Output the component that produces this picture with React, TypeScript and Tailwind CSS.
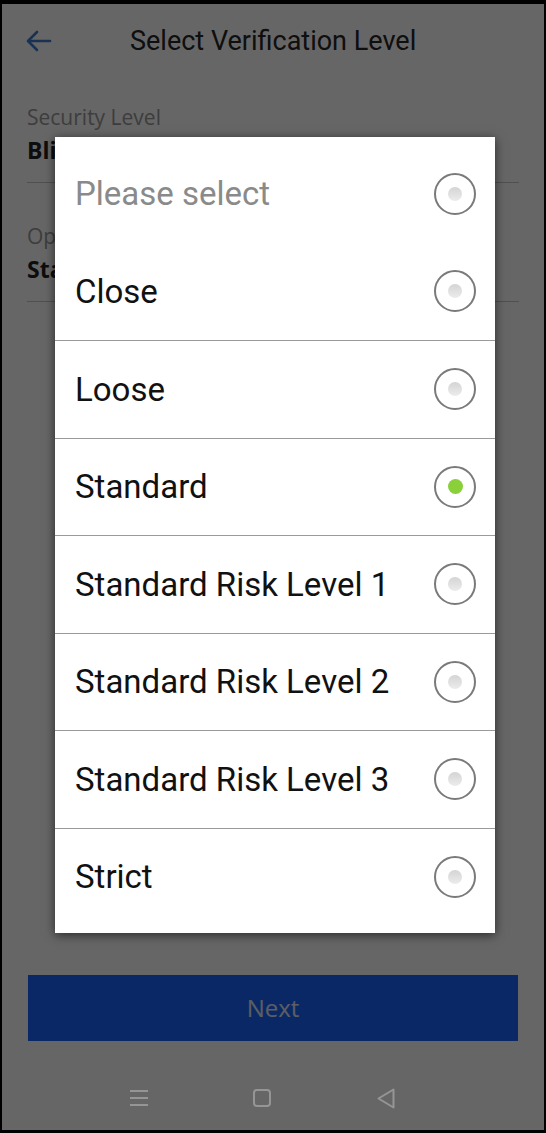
import React, { useState } from 'react';

type Option = {
  label: string;
  placeholder?: boolean;
};

const OPTIONS: Option[] = [
  { label: 'Please select', placeholder: true },
  { label: 'Close' },
  { label: 'Loose' },
  { label: 'Standard' },
  { label: 'Standard Risk Level 1' },
  { label: 'Standard Risk Level 2' },
  { label: 'Standard Risk Level 3' },
  { label: 'Strict' },
];

const Radio: React.FC<{ checked: boolean }> = ({ checked }) => (
  <div className="w-[42px] h-[42px] rounded-full border-2 border-[#7a7a7a] flex items-center justify-center">
    {checked ? (
      <div className="w-[15px] h-[15px] rounded-full bg-[#8ad03a]" />
    ) : (
      <div className="w-[14px] h-[14px] rounded-full bg-gradient-to-b from-[#d4d4d4] to-[#ececec]" />
    )}
  </div>
);

const App: React.FC = () => {
  const [selected, setSelected] = useState('Standard');

  return (
    <div className="w-[546px] h-[1133px] bg-black pt-[4px] px-[2px] pb-[3px]">
      <div className="relative w-full h-full bg-white overflow-hidden" style={{ fontFamily: 'Roboto, "Open Sans", sans-serif' }}>
        {/* page under the dialog */}
        <div className="flex items-center h-[74px] px-[23px]">
          <svg width="28" height="24" viewBox="0 0 28 24" fill="none" stroke="#3f7bd0" strokeWidth="2.6" strokeLinecap="round" strokeLinejoin="round">
            <path d="M25 12H4" />
            <path d="M12 3l-9 9 9 9" />
          </svg>
          <div className="ml-[77px] text-[27px] text-[#262626]">Select Verification Level</div>
        </div>

        <div className="px-[25px] pt-[24px]" style={{ fontFamily: '"Open Sans", sans-serif' }}>
          <div className="text-[21px] leading-[30px] text-[#9a9a9a]">Security Level</div>
          <div className="text-[23px] leading-[36px] font-bold text-[#222]">Blind Check</div>
          <div className="mt-[14px] h-px bg-[#c8c8c8]" />

          <div className="pt-[38px] text-[21px] leading-[30px] text-[#9a9a9a]">Operation Mode</div>
          <div className="text-[23px] leading-[36px] font-bold text-[#222]">Standard</div>
          <div className="mt-[14px] h-px bg-[#c8c8c8]" />
        </div>

        <div className="absolute left-[26px] right-[26px] top-[971px] h-[66px] bg-[#1c64ff] flex items-center justify-center text-[24px] text-[#e4ecf8]" style={{ fontFamily: '"Open Sans", sans-serif' }}>
          Next
        </div>

        {/* dim overlay */}
        <div className="absolute inset-0 bg-black/60" />

        {/* system nav bar */}
        <div className="absolute left-0 right-0 top-[1080px] h-[30px] flex items-center">
          <div className="absolute left-[128px] top-[6px] w-[18px] flex flex-col gap-[5px]">
            <div className="h-[2px] bg-[#959595]" />
            <div className="h-[2px] bg-[#959595]" />
            <div className="h-[2px] bg-[#959595]" />
          </div>
          <div className="absolute left-[251px] top-[5px] w-[18px] h-[18px] rounded-[4px] border-2 border-[#959595]" />
          <svg className="absolute left-[374px] top-[3px]" width="21" height="23" viewBox="0 0 21 23" fill="none" stroke="#959595" strokeWidth="2" strokeLinejoin="round">
            <path d="M17.5 2.5v18L2.5 11.5z" />
          </svg>
        </div>

        {/* dialog */}
        <div className="absolute left-[53px] top-[133px] w-[440px] bg-white py-[8px] shadow-[0_2px_10px_rgba(0,0,0,0.6)]">
          {OPTIONS.map((o, i) => (
            <div
              key={o.label}
              onClick={() => !o.placeholder && setSelected(o.label)}
              className={`h-[97.5px] flex items-center justify-between pl-[20px] pr-[19px] ${i > 1 ? 'border-t border-[#9a9a9a]' : ''}`}
            >
              <span className={`text-[33px] ${o.placeholder ? 'text-[#8a8a8a]' : 'text-[#111]'}`}>{o.label}</span>
              <Radio checked={selected === o.label} />
            </div>
          ))}
        </div>
      </div>
    </div>
  );
};

export default App;
